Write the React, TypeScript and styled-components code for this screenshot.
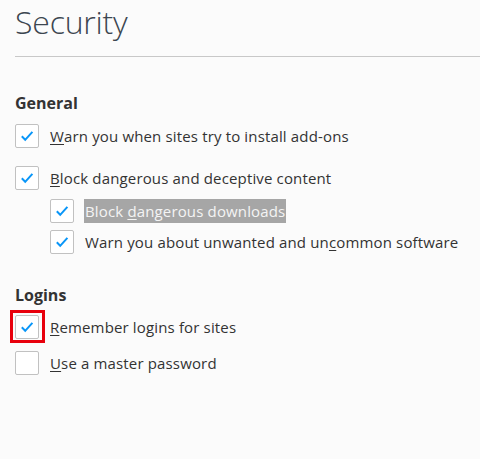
import React from 'react';
import styled, { createGlobalStyle } from 'styled-components';

const GlobalStyle = createGlobalStyle`
  html, body {
    margin: 0;
    padding: 0;
    background: #fbfbfb;
  }
  body {
    font-family: 'Open Sans', 'Noto Sans', sans-serif;
    color: #333;
  }
`;

const Page = styled.div`
  width: 480px;
  height: 459px;
  padding-left: 15px;
  box-sizing: border-box;
  overflow: hidden;
`;

const Title = styled.h1`
  margin: 0;
  font-size: 32px;
  font-weight: 300;
  line-height: 44px;
  color: #3c4650;
  letter-spacing: -0.2px;
`;

const Divider = styled.hr`
  margin: 12px 0 0 0;
  border: 0;
  border-top: 1px solid #c8c8c8;
`;

const SectionTitle = styled.h2<{ $top: number }>`
  margin: ${(p) => p.$top}px 0 0 0;
  font-size: 16px;
  font-weight: 700;
  line-height: 20px;
  color: #333;
`;

const Row = styled.label<{ $indent?: boolean; $top: number }>`
  display: flex;
  align-items: center;
  gap: 10px;
  margin-top: ${(p) => p.$top}px;
  margin-left: ${(p) => (p.$indent ? 35 : 0)}px;
  font-size: 15px;
  line-height: 24px;
  letter-spacing: 0.15px;
  color: #333;
`;

const BoxWrap = styled.span<{ $focused?: boolean }>`
  position: relative;
  display: flex;
  flex: 0 0 auto;
  &::after {
    content: '';
    display: ${(p) => (p.$focused ? 'block' : 'none')};
    position: absolute;
    left: -5px;
    top: -5px;
    right: -6px;
    bottom: -4px;
    border: 3px solid #e8000c;
  }
`;

const Box = styled.span`
  display: flex;
  align-items: center;
  justify-content: center;
  width: 24px;
  height: 24px;
  box-sizing: border-box;
  border: 1px solid #c1c1c1;
  border-radius: 2px;
  background: #fff;
`;

const Text = styled.span<{ $selected?: boolean }>`
  padding: 0 1px;
  background: ${(p) => (p.$selected ? '#a6a6a6' : 'transparent')};
  color: ${(p) => (p.$selected ? '#f4f4f4' : '#333')};
`;

const Key = styled.span`
  text-decoration: underline;
  text-underline-offset: 2px;
`;

const Check = () => (
  <svg width="14" height="12" viewBox="0 0 14 12">
    <path d="M1.8 6.3 L5.2 9.8 L12.4 1.8" fill="none" stroke="#0996f8" strokeWidth="2" />
  </svg>
);

type Item = {
  before: string;
  key: string;
  after: string;
  checked: boolean;
  indent?: boolean;
  top: number;
  selected?: boolean;
  focused?: boolean;
};

const CheckRow = ({ item }: { item: Item }) => (
  <Row $indent={item.indent} $top={item.top}>
    <BoxWrap $focused={item.focused}>
      <Box>{item.checked && <Check />}</Box>
    </BoxWrap>
    <Text $selected={item.selected}>
      {item.before}
      <Key>{item.key}</Key>
      {item.after}
    </Text>
  </Row>
);

const general: Item[] = [
  { before: '', key: 'W', after: 'arn you when sites try to install add-ons', checked: true, top: 11 },
  { before: '', key: 'B', after: 'lock dangerous and deceptive content', checked: true, top: 18 },
  { before: 'Block ', key: 'd', after: 'angerous downloads', checked: true, indent: true, top: 9, selected: true },
  { before: 'Warn you about unwanted and un', key: 'c', after: 'ommon software', checked: true, indent: true, top: 7 },
];

const logins: Item[] = [
  { before: '', key: 'R', after: 'emember logins for sites', checked: true, top: 10, focused: true },
  { before: '', key: 'U', after: 'se a master password', checked: false, top: 12 },
];

export default function App() {
  return (
    <>
      <GlobalStyle />
      <Page>
        <Title>Security</Title>
        <Divider />
        <SectionTitle $top={36}>General</SectionTitle>
        {general.map((item) => (
          <CheckRow key={item.before + item.after} item={item} />
        ))}
        <SectionTitle $top={31}>Logins</SectionTitle>
        {logins.map((item) => (
          <CheckRow key={item.before + item.after} item={item} />
        ))}
      </Page>
    </>
  );
}
